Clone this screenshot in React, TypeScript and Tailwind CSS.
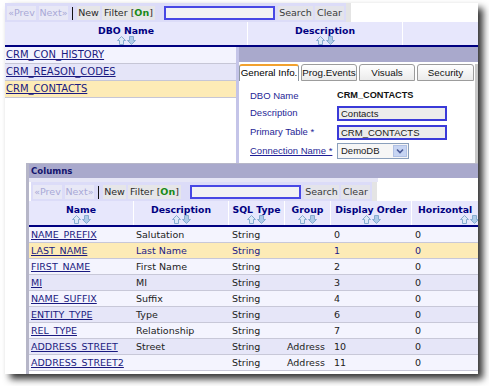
import React from "react";

const DV = "font-['DejaVu_Sans',sans-serif]";
const LS = "font-['Liberation_Sans',Arial,sans-serif]";

function SortArrows() {
  return (
    <svg width="19" height="9" viewBox="0 0 19 9" className="block">
      <polygon
        points="4.5,0.5 8.5,4.5 6.5,4.5 6.5,8.5 2.5,8.5 2.5,4.5 0.5,4.5"
        fill="#dde9f6"
        stroke="#86abd0"
        strokeWidth="1"
      />
      <polygon
        points="12.5,0.5 16.5,0.5 16.5,4.5 18.5,4.5 14.5,8.5 10.5,4.5 12.5,4.5"
        fill="#aecbe8"
        stroke="#86abd0"
        strokeWidth="1"
      />
    </svg>
  );
}

function Toolbar() {
  const btn = "h-[14px] leading-[14px] text-center whitespace-nowrap shrink-0";
  return (
    <div className={"flex h-[19px] shrink-0 text-[9.5px] " + DV}>
      <div className="flex items-start pt-[3px] pl-[2px] bg-[#dcdcf8] h-full w-[341px] shrink-0">
        <span className={btn + " w-[29px] bg-[#e8e8f6] text-[#a8a8d6]"}>«Prev</span>
        <span className={btn + " ml-[3px] w-[29px] bg-[#e8e8f6] text-[#a8a8d6]"}>Next»</span>
        <span className="ml-[4px] mt-[1px] w-[1px] h-[13px] bg-[#111111] shrink-0" />
        <span className={btn + " ml-[4px] w-[23px] bg-[#e6e6e8] text-[#2a2a2a]"}>New</span>
        <span className={btn + " ml-[2px] w-[53px] bg-[#e6e6e8] text-[#2a2a2a]"}>
          Filter [<b className="text-[#178a17]">On</b>]
        </span>
        <span className="ml-[9px] w-[111px] h-[14px] border-2 border-[#4848e4] bg-[#f2f2f4] shrink-0" />
        <span className={btn + " ml-[3px] w-[35px] bg-[#e4e4ea] text-[#3a3a3a]"}>Search</span>
        <span className={btn + " ml-[2px] w-[29px] bg-[#e4e4ea] text-[#3a3a3a]"}>Clear</span>
      </div>
      <div className="w-[5px] h-full bg-[#e4e4e4] shrink-0" />
    </div>
  );
}

const rowsTop = [
  { name: "CRM_CON_HISTORY", bg: "bg-[#f3f3fe]" },
  { name: "CRM_REASON_CODES", bg: "bg-[#e5e5f8]" },
  { name: "CRM_CONTACTS", bg: "bg-[#fdebb6]" },
];

const cols: string[][] = [
  ["NAME_PREFIX", "Salutation", "String", "", "0", "0"],
  ["LAST_NAME", "Last Name", "String", "", "1", "0"],
  ["FIRST_NAME", "First Name", "String", "", "2", "0"],
  ["MI", "MI", "String", "", "3", "0"],
  ["NAME_SUFFIX", "Suffix", "String", "", "4", "0"],
  ["ENTITY_TYPE", "Type", "String", "", "6", "0"],
  ["REL_TYPE", "Relationship", "String", "", "7", "0"],
  ["ADDRESS_STREET", "Street", "String", "Address", "10", "0"],
  ["ADDRESS_STREET2", "", "String", "Address", "11", "0"],
];

function HeadCell({ label, w, last }: { label: string; w: string; last?: boolean }) {
  return (
    <div
      className={
        w +
        " shrink-0 h-full flex flex-col items-center pt-[4px] " +
        (last ? "" : "border-r border-white")
      }
    >
      <span className="text-[9.3px] leading-[10px] font-bold text-[#000080] whitespace-nowrap">
        {label}
      </span>
      <SortArrows />
    </div>
  );
}

function DetailPanel() {
  const tab =
    "shrink-0 w-[56px] h-[17px] bg-gradient-to-b from-white to-[#ebebeb] border border-[#9c9c9c] rounded-t-[3px] text-center leading-[15px] text-[#111] whitespace-nowrap";
  return (
    <div className={"absolute left-[231px] top-[44px] right-0 h-[118px] bg-white border-l-[3px] border-[#c4c4e8] " + LS}>
      <div className="h-[15px] bg-[#a9a9cc]" />
      <div className="flex h-[calc(100%-15px)]">
        <div className="flex-1 flex flex-col">
          <div className="flex items-end gap-[2px] mt-[2px] h-[17px] text-[9.8px]">
            <div className="shrink-0 w-[60px] h-[17px] bg-white border-x border-[#8c96a0] border-t-2 border-t-[#f2a12e] rounded-t-[3px] text-center leading-[14px] text-black whitespace-nowrap">
              General Info.
            </div>
            <div className={tab}>Prog.Events</div>
            <div className={tab}>Visuals</div>
            <div className={tab + " w-[57px]"}>Security</div>
          </div>
          <div className="pl-[11px] text-[9.5px]">
            <div className="flex items-center h-[14px] mt-[8px]">
              <span className="w-[87px] text-[#1f1f96]">DBO Name</span>
              <span className="font-bold text-[9.2px] text-[#111]">CRM_CONTACTS</span>
            </div>
            <div className="flex items-center h-[15px] mt-[3px]">
              <span className="w-[87px] text-[#1f1f96]">Description</span>
              <div className="w-[110px] h-[15px] border-2 border-[#3a3ad8] bg-[#ececec] pl-[2px] leading-[11px] text-[#1a1a1a]">
                Contacts
              </div>
            </div>
            <div className="flex items-center h-[15px] mt-[4px]">
              <span className="w-[87px] text-[#1f1f96]">Primary Table *</span>
              <div className="w-[110px] h-[15px] border-2 border-[#3a3ad8] bg-[#ececec] pl-[2px] leading-[11px] text-[#1a1a1a]">
                CRM_CONTACTS
              </div>
            </div>
            <div className="flex items-center h-[16px] mt-[3px]">
              <span className="w-[87px] text-[#1f1f96] underline">Connection Name *</span>
              <div className="w-[72px] h-[16px] border border-[#8aa0bc] bg-[#f6f6f6] flex items-center justify-between pl-[3px] pr-[1px] text-[#1a1a1a]">
                <span>DemoDB</span>
                <span className="w-[14px] h-[12px] bg-[#c6d4f2] border border-[#b0c0e4] flex items-center justify-center">
                  <svg width="8" height="6" viewBox="0 0 8 6">
                    <path d="M1 1.5 L4 4.5 L7 1.5" fill="none" stroke="#4a5a98" strokeWidth="1.6" />
                  </svg>
                </span>
              </div>
            </div>
          </div>
        </div>
        <div className="w-[3px] bg-[#c8c8c8] mt-[2px]" />
      </div>
    </div>
  );
}

function ColumnsPanel() {
  const cellW = ["w-[105px]", "w-[95px]", "w-[56px]", "w-[46px]", "w-[81px]", "w-[80px]"];
  const cellPad = ["pl-[2px]", "pl-[2px]", "pl-[3px]", "pl-[2px]", "pl-[3px]", "pl-[3px]"];
  return (
    <div className={"absolute left-[21px] top-[160px] right-0 bottom-0 bg-white border-l-[3px] border-t border-[#b6b6c8] flex flex-col overflow-hidden " + DV}>
      <div className="h-[14px] bg-[#a9a9cc] pl-[2px] text-[8.6px] leading-[14px] font-bold text-[#14146e] shrink-0">
        Columns
      </div>
      <div className="w-[349px] h-[4px] bg-[#e6e6f6] shrink-0" />
      <div className="pl-[2px] bg-white shrink-0">
        <Toolbar />
      </div>
      <div className="flex h-[26px] bg-[#e7e7fc] border-b-2 border-[#000080] shrink-0">
        <HeadCell label="Name" w={cellW[0]} />
        <HeadCell label="Description" w={cellW[1]} />
        <HeadCell label="SQL Type" w={cellW[2]} />
        <HeadCell label="Group" w={cellW[3]} />
        <HeadCell label="Display Order" w={cellW[4]} />
        <div className="w-[80px] shrink-0 h-full flex flex-col pt-[4px]">
          <span className="pl-[6px] text-[9.3px] leading-[10px] font-bold text-[#000080] whitespace-nowrap">
            Horizontal
          </span>
          <span className="self-start ml-[48px]">
            <SortArrows />
          </span>
        </div>
      </div>
      {cols.map((r, i) => {
        const sel = i === 1;
        const bg = sel ? "bg-[#fdebb6]" : i % 2 === 0 ? "bg-[#f4f4fe]" : "bg-[#e6e6f8]";
        const txt = sel ? "text-[#1c1c88]" : "text-[#222222]";
        return (
          <div key={r[0]} className={"flex h-[16px] shrink-0 border-b border-[#c8c8d8] text-[9.5px] leading-[15px] " + bg}>
            {r.map((c, j) => (
              <div key={j} className={cellW[j] + " " + cellPad[j] + " shrink-0 whitespace-nowrap overflow-hidden " + (j === 0 ? "" : txt)}>
                {j === 0 ? <span className="text-[#1a1a80] underline">{c}</span> : c}
              </div>
            ))}
          </div>
        );
      })}
    </div>
  );
}

export default function App() {
  return (
    <div className="w-[489px] h-[386px] bg-white pt-[3px] pl-[5px]">
      <div className="relative w-[473px] h-[371px] bg-white overflow-hidden shadow-[5px_5px_7px_rgba(0,0,0,0.8)]">
        <div className={"flex flex-col " + DV}>
          <Toolbar />
          <div className="flex h-[25px] bg-[#e7e7fc] border-b-2 border-[#000080]">
            <HeadCell label="DBO Name" w="w-[243px]" />
            <HeadCell label="Description" w="w-[155px]" />
            <div className="flex-1" />
          </div>
          {rowsTop.map((r) => (
            <div key={r.name} className={"h-[17px] border-b border-[#c6c6d6] pl-[1px] text-[10px] leading-[16px] " + r.bg}>
              <span className="text-[#1a1a80] underline">{r.name}</span>
            </div>
          ))}
        </div>
        <DetailPanel />
        <ColumnsPanel />
      </div>
    </div>
  );
}
